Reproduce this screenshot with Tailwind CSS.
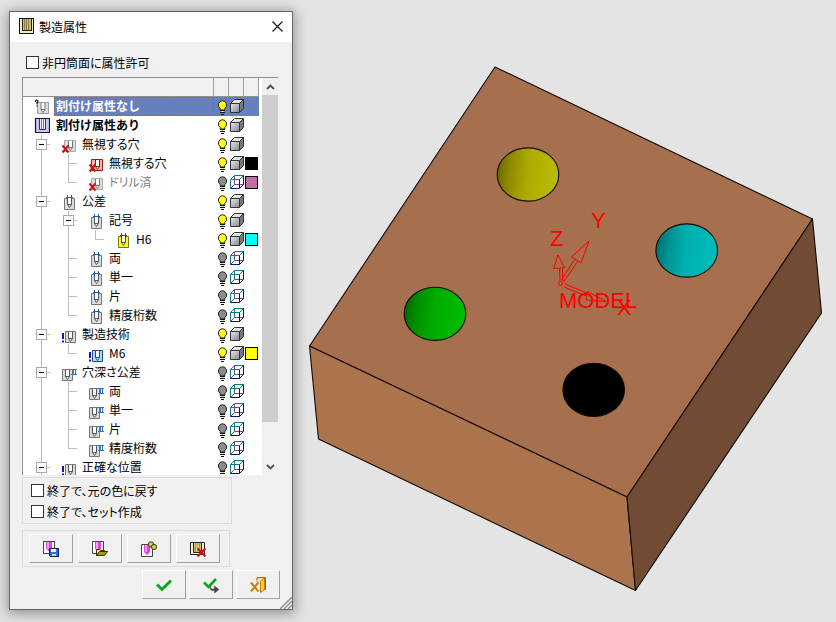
<!DOCTYPE html>
<html lang="ja">
<head>
<meta charset="utf-8">
<title>製造属性</title>
<script src="https://cdn.jsdelivr.net/npm/@tailwindcss/browser@4"></script>
</head>
<body class="relative min-h-screen overflow-hidden bg-[#e4e4e4] font-['Noto_Sans_CJK_JP',sans-serif] text-[12px] leading-[19px] text-black [font-feature-settings:'palt']">

<!-- Icon definitions -->
<svg class="absolute h-0 w-0" aria-hidden="true">
  <defs>
    <linearGradient id="cubeFace" x1="0" y1="0" x2="1" y2="1"><stop offset="0" stop-color="#e8e8ee"/><stop offset="1" stop-color="#85858d"/></linearGradient>
    <g id="pin"><path d="M4.5 1v6.5l2 3l2-3V1z" fill="#fff" stroke="none"/><path d="M4.500 1v6.500h4V1M4.500 7.500l2 3l2-3" fill="none"/></g>
  </defs>
  <symbol id="i-bulb-on" viewBox="0 0 15 19"><path d="M8.500 3.700a4.300 4.300 0 0 1 2.300 7.800V13H6.200v-1.500A4.300 4.300 0 0 1 8.500 3.700z" fill="#ff0" stroke="#222"/><path d="M6 13.500h5M6 15.500h5M7 17.500h3" stroke="#111" stroke-width="1.200"/><path d="M7 14.500h3" stroke="#ddd"/><path d="M7 6h2" stroke="#ffffd0"/></symbol>
  <symbol id="i-bulb-off" viewBox="0 0 15 19"><path d="M8.500 3.700a4.300 4.300 0 0 1 2.300 7.800V13H6.200v-1.500A4.300 4.300 0 0 1 8.500 3.700z" fill="#8c8c8c" stroke="#222"/><path d="M6 13.500h5M6 15.500h5M7 17.500h3" stroke="#111" stroke-width="1.200"/><path d="M7 14.500h3" stroke="#ddd"/></symbol>
  <symbol id="i-cube" viewBox="0 0 15 19"><path d="M1.500 6.500l4-4h9l-4 4z" fill="#e3e3e6"/><path d="M10.500 6.500l4-4v9l-4 4z" fill="#77777c"/><path d="M1.500 6.500h9v9h-9z" fill="url(#cubeFace)"/><path d="M1.500 6.500l4-4h9v9l-4 4h-9zM1.500 6.500h9v9M10.500 6.500l4-4" fill="none" stroke="#333"/></symbol>
  <symbol id="i-wire" viewBox="0 0 15 19"><path d="M1.500 6.500h9v9h-9z" fill="#fff" stroke="none"/><path d="M5.500 2.500v9h9M5.500 11.500l-4 4" fill="none" stroke="#6a4f7c"/><path d="M1.500 15.500v-9l4-4h9l-4 4h-9" fill="none" stroke="#087c84"/><path d="M14.500 2.500v9l-4 4h-9M10.500 6.500v9" fill="none" stroke="#10106c"/></symbol>

  <symbol id="i-unassigned" viewBox="0 0 16 19"><path d="M3.500 5.500h11v11h-11z" fill="#dcdcdc" stroke="#999"/><use href="#pin" x="2.500" y="5" stroke="#777"/><path d="M1.500 5V4q0-1 1.200-1T4 4.300q0 .8-1 1.400v1.500M3 8.500v1" fill="none" stroke="#111" stroke-width="1.200"/></symbol>
  <symbol id="i-assigned" viewBox="0 0 16 19"><path d="M1.500 2.500h14v14h-14z" fill="#c9c6f4" stroke="#16163a" stroke-width="1.200"/><path d="M5 3h7v10H5z" fill="#f8e8ff"/><path d="M5.500 3v10.500h6V3" fill="none" stroke="#303070"/><path d="M7.500 3v10M9.500 3v10" stroke="#e23ad0"/></symbol>
  <symbol id="i-ignored" viewBox="0 0 16 19"><path d="M3.500 5.500h11v11h-11z" fill="#dcdcdc" stroke="#aaa"/><use href="#pin" x="3" y="5" stroke="#777"/><path d="M1.500 10.500l6 7M7.500 10.500l-6 7" stroke="#c81410" stroke-width="2"/></symbol>
  <symbol id="i-ignored-red" viewBox="0 0 16 19"><path d="M3.500 5.500h11v11h-11z" fill="#ffb3ad" stroke="#a31712"/><use href="#pin" x="3" y="5" stroke="#7b1c1c"/><path d="M1.500 10.500l6 7M7.500 10.500l-6 7" stroke="#c81410" stroke-width="2"/></symbol>
  <symbol id="i-tol" viewBox="0 0 16 19"><path d="M3.500 6.500h10v11h-10z" fill="#dadada" stroke="#777"/><use href="#pin" x="2" y="5" stroke="#555"/><path d="M6.500 3v6M10.500 3v6M5 5.500h7" stroke="#2f5d9c"/></symbol>
  <symbol id="i-tol-yellow" viewBox="0 0 16 19"><path d="M3.500 6.500h10v11h-10z" fill="#ff2" stroke="#777700"/><use href="#pin" x="2" y="5" stroke="#555"/><path d="M6.500 3v6M10.500 3v6M5 5.500h7" stroke="#444"/></symbol>
  <symbol id="i-tech" viewBox="0 0 16 19"><path d="M4.500 6.500h10v11h-10z" fill="#dadada" stroke="#777"/><use href="#pin" x="3" y="6" stroke="#555"/><path d="M2 8v6M2 15.500v2" stroke="#2a08c8" stroke-width="2"/></symbol>
  <symbol id="i-tech-blue" viewBox="0 0 16 19"><path d="M4.500 6.500h10v11h-10z" fill="#a9dcfa" stroke="#1c4d80"/><use href="#pin" x="3" y="6" stroke="#1c4d80"/><path d="M2 8v6M2 15.500v2" stroke="#2a08c8" stroke-width="2"/></symbol>
  <symbol id="i-depth" viewBox="0 0 16 19"><path d="M1.500 6.500h10v11h-10z" fill="#dadada" stroke="#777"/><use href="#pin" x="0" y="6" stroke="#555"/><path d="M10 6.500h6M10 11.500h6M12.500 6.500v5M14.500 6.500v5" stroke="#3273bd"/></symbol>

  <symbol id="g-line" viewBox="0 0 27 19"><path d="M7.500 0v19" stroke="#bdbdbd"/></symbol>
  <symbol id="g-tee" viewBox="0 0 27 19"><path d="M7.500 0v19M8 9.500h8" stroke="#bdbdbd"/></symbol>
  <symbol id="g-end" viewBox="0 0 27 19"><path d="M7.500 0v9.500h8.500" fill="none" stroke="#bdbdbd"/></symbol>
  <symbol id="g-box" viewBox="0 0 27 19"><path d="M7.500 0v19M8 9.500h8" stroke="#bdbdbd"/><path d="M2.500 4.500h10v10h-10z" fill="#fff" stroke="#a9a9a9"/><path d="M5 9.500h5" stroke="#000"/></symbol>
</svg>

<!-- 3D viewport -->
<main>
  <svg class="block h-screen w-full" viewBox="0 0 836 622" preserveAspectRatio="xMinYMin meet" role="img" aria-label="MODEL">
    <defs>
      <linearGradient id="hy" x1="0" y1=".4" x2="1" y2=".5"><stop offset="0" stop-color="#686800"/><stop offset=".2" stop-color="#8c8a00"/><stop offset=".5" stop-color="#adab00"/><stop offset="1" stop-color="#bcbc00"/></linearGradient>
      <linearGradient id="hc" x1="0" y1=".4" x2="1" y2=".5"><stop offset="0" stop-color="#006d6d"/><stop offset=".2" stop-color="#009292"/><stop offset=".5" stop-color="#00b0b0"/><stop offset="1" stop-color="#00bcbc"/></linearGradient>
      <linearGradient id="hg" x1="0" y1=".4" x2="1" y2=".5"><stop offset="0" stop-color="#006800"/><stop offset=".2" stop-color="#008e00"/><stop offset=".5" stop-color="#00ad00"/><stop offset="1" stop-color="#00bc00"/></linearGradient>
    </defs>
    <g stroke="#120a06" stroke-width="1.100" stroke-linejoin="round">
      <path d="M495 67L812.500 219L627 497L309.500 346z" fill="#a66f4d"/>
      <path d="M309.500 346L627 497L635.500 590.500L318.500 439z" fill="#ac744d"/>
      <path d="M812.500 219L821.500 313L635.500 590.500L627 497z" fill="#714b34"/>
      <ellipse cx="528" cy="174.500" rx="30.800" ry="26.600" fill="url(#hy)"/>
      <ellipse cx="686.700" cy="250.500" rx="30.800" ry="26.600" fill="url(#hc)"/>
      <ellipse cx="435" cy="313.800" rx="30.800" ry="26.600" fill="url(#hg)"/>
      <ellipse cx="593.700" cy="389.800" rx="30.800" ry="26.600" fill="#000"/>
    </g>
    <g fill="none" stroke="#f00">
      <circle cx="560.500" cy="283.500" r="2"/>
      <path d="M558 255l-4.500 13.500l11-.7zM559.500 268.500l.5 12.500M562.500 268.500l.2 12.500"/>
      <path d="M589 241l-17.500 16l9.500 6zM574.500 259.500l-13 20.500M577.500 261.500l-14 20.500"/>
      <path d="M565 284l22 9M564 287l22 9M587.500 291.500l18.500 10l-20-1.500z"/>
    </g>
    <g fill="#f00" class="font-['Liberation_Sans',sans-serif] text-[22px]">
      <text x="559" y="308">MODEL</text>
      <text x="550" y="246">Z</text>
      <text x="591" y="228">Y</text>
      <text x="617" y="315">X</text>
    </g>
  </svg>
</main>

<!-- Dialog window -->
<section role="dialog" aria-labelledby="dlg-title" class="absolute top-[11px] left-[9px] w-[284px] border border-[#666] bg-[#f0f0f0] shadow-[0_2px_12px_2px_rgba(0,0,0,0.35)]">
  <header class="flex h-[30px] items-center gap-[5px] bg-white pr-[9px] pb-[2px] pl-[9px]">
    <svg class="h-4 w-[15px]" viewBox="0 0 15 16" shape-rendering="crispEdges" aria-hidden="true"><path d="M.5.5h14v15H.5z" fill="#f3eec8" stroke="#111"/><path d="M3 1h9v11H3z" fill="#cdbb6c"/><path d="M3.500 1v11.500h8.500V1" fill="none" stroke="#222"/><path d="M5.500 1v11M7.500 1v11M9.500 1v11" stroke="#8c7f43"/></svg>
    <h1 id="dlg-title" class="flex-1">製造属性</h1>
    <button type="button" aria-label="閉じる" class="flex h-4 w-3 items-center justify-center"><svg class="h-[11px] w-[11px]" viewBox="0 0 11 11"><path d="M.5.5l10 10M10.500.5l-10 10" stroke="#111" stroke-width="1.100"/></svg></button>
  </header>

  <div class="pt-[10px] pr-3 pb-[10px] pl-3">
    <label class="flex h-5 items-center gap-[3px] pl-1"><input type="checkbox" class="h-[13px] w-[13px] appearance-none border border-[#333] bg-white">非円筒面に属性許可</label>

    <!-- Attribute tree -->
    <div class="mt-[5px] mr-[2px] flex h-[398px] gap-[3px] overflow-hidden border-t border-l border-[#909090] bg-white">
      <table class="flex-1 table-fixed border-collapse">
        <colgroup><col><col class="w-[15px]"><col class="w-[15px]"><col class="w-[15px]"></colgroup>
        <thead>
          <tr class="h-[19px] bg-[#f0f0f0] shadow-[inset_0_-1px_0_#909090]">
            <td class="p-0 shadow-[inset_-1px_0_0_#a0a0a0]"></td><td class="p-0 shadow-[inset_-1px_0_0_#a0a0a0]"></td><td class="p-0 shadow-[inset_-1px_0_0_#a0a0a0]"></td><td class="p-0 shadow-[inset_-1px_0_0_#a0a0a0]"></td>
          </tr>
        </thead>
        <tbody id="tree"></tbody>
      </table>
      <div class="flex w-4 flex-col bg-[#f0f0f0]">
        <button type="button" aria-label="上へ" class="flex h-[17px] items-center justify-center"><svg class="h-[6px] w-[9px]" viewBox="0 0 9 6"><path d="M1 5l3.500-3.500L8 5" fill="none" stroke="#505050" stroke-width="1.800"/></svg></button>
        <div class="flex-1"><div class="h-[90%] bg-[#cdcdcd]"></div></div>
        <button type="button" aria-label="下へ" class="flex h-[17px] items-center justify-center"><svg class="h-[6px] w-[9px]" viewBox="0 0 9 6"><path d="M1 1l3.500 3.500L8 1" fill="none" stroke="#505050" stroke-width="1.800"/></svg></button>
      </div>
    </div>

    <div class="mt-[2px] w-[210px] border border-[#dcdcdc] pt-[2px] pb-px pl-2">
      <label class="flex h-[21px] items-center gap-[3px]"><input type="checkbox" class="h-[13px] w-[13px] appearance-none border border-[#333] bg-white">終了で、元の色に戻す</label>
      <label class="flex h-[21px] items-center gap-[3px]"><input type="checkbox" class="h-[13px] w-[13px] appearance-none border border-[#333] bg-white">終了で、セット作成</label>
    </div>

    <div class="mt-[6px] flex w-[208px] gap-[5px] border border-[#dcdcdc] py-[3px] pl-[6px]">
      <button type="button" aria-label="保存" class="flex h-[29px] w-11 items-center justify-center border border-t-white border-r-[#a0a0a0] border-b-[#a0a0a0] border-l-white bg-[#f0f0f0]">
        <svg class="h-4 w-4" viewBox="0 0 16 16" shape-rendering="crispEdges"><path d="M.5.5h11v12H.5z" fill="#fff" stroke="#444"/><path d="M3 1h6v7L6 11L3 8z" fill="#f03ce0"/><path d="M4 1h2v7H4z" fill="#ffa0f8"/><path d="M6.500 7.500h9v8h-8l-1-1z" fill="#2f70c8" stroke="#102050"/><path d="M8 8h5v3H8z" fill="#e8f0ff"/><path d="M9 13h4v2H9z" fill="#c8d8f0"/></svg>
      </button>
      <button type="button" aria-label="開く" class="flex h-[29px] w-11 items-center justify-center border border-t-white border-r-[#a0a0a0] border-b-[#a0a0a0] border-l-white bg-[#f0f0f0]">
        <svg class="h-4 w-4" viewBox="0 0 16 16"><path d="M.5.5h11v12H.5z" fill="#fff" stroke="#444"/><path d="M3 1h6v7L6 11L3 8z" fill="#f03ce0"/><path d="M4 1h2v7H4z" fill="#ffa0f8"/><path d="M4.500 14.500v-6h3l1 1h4v2z" fill="#fff27a" stroke="#333000"/><path d="M4.500 14.500l3-4h8l-3 4z" fill="#a99a10" stroke="#333000"/></svg>
      </button>
      <button type="button" aria-label="表示" class="flex h-[29px] w-11 items-center justify-center border border-t-white border-r-[#a0a0a0] border-b-[#a0a0a0] border-l-white bg-[#f0f0f0]">
        <svg class="h-4 w-4" viewBox="0 0 16 16"><path d="M.5 3.500h11v12H.5z" fill="#fff" stroke="#444"/><path d="M3 4h6v7l-3 3l-3-3z" fill="#f03ce0"/><path d="M4 4h2v7H4z" fill="#ffa0f8"/><g fill="#c9bb4c" stroke="#4a4208"><circle cx="10" cy="3.500" r="2.700"/><circle cx="13" cy="6" r="2.600"/></g><path d="M9.500 3h1M12.500 6h1" stroke="#fff"/></svg>
      </button>
      <button type="button" aria-label="削除" class="flex h-[29px] w-11 items-center justify-center border border-t-white border-r-[#a0a0a0] border-b-[#a0a0a0] border-l-white bg-[#f0f0f0]">
        <svg class="h-4 w-4" viewBox="0 0 16 16"><path d="M.5 1.500h14v12H.5z" fill="#f4f0dc" stroke="#222"/><path d="M3.500 1.500v10h8v-10z" fill="#d8c47a" stroke="#222"/><path d="M5.500 2v9M9.500 2v9" stroke="#8f9a65"/><path d="M7.500 2v9" stroke="#e8a058"/><path d="M7.500 7.500l8 8M15.500 7.500l-8 8" stroke="#d01008" stroke-width="2"/></svg>
      </button>
    </div>

    <div class="mt-[3px] flex justify-end gap-[3px]">
      <button type="button" aria-label="OK" class="flex h-[29px] w-11 items-center justify-center border border-t-white border-r-[#a0a0a0] border-b-[#a0a0a0] border-l-white bg-[#f0f0f0]">
        <svg class="h-4 w-4" viewBox="0 0 16 16"><path d="M1 7.500l5 5L15 3.500" fill="none" stroke="#0ba818" stroke-width="3"/></svg>
      </button>
      <button type="button" aria-label="適用" class="flex h-[29px] w-11 items-center justify-center border border-t-white border-r-[#a0a0a0] border-b-[#a0a0a0] border-l-white bg-[#f0f0f0]">
        <svg class="h-4 w-4" viewBox="0 0 16 16"><path d="M1 5.500l4.500 4.500L13 2" fill="none" stroke="#0ba818" stroke-width="2.600"/><path d="M7.500 9v1.500q0 1.500 2 1.500h2V9l4.500 3.500l-4.500 3.500v-2.500h-2Q7 13.500 7 10.500z" fill="#4a404c" stroke="#4a404c" stroke-width=".5"/></svg>
      </button>
      <button type="button" aria-label="終了" class="flex h-[29px] w-11 items-center justify-center border border-t-white border-r-[#a0a0a0] border-b-[#a0a0a0] border-l-white bg-[#f0f0f0]">
        <svg class="h-4 w-4" viewBox="0 0 16 16"><path d="M7 .5h8.500v12H13" fill="#f7e08c" stroke="#a86410"/><path d="M7 .5v4" stroke="#a86410"/><path d="M10.500 4.500l4-3.500v11.500l-4 3z" fill="#ffd21c" stroke="#b87a08"/><path d="M1 5.500l7.500 9M8.500 5.500L1 14.500" stroke="#d0820e" stroke-width="2.200"/></svg>
      </button>
    </div>
  </div>
  <svg class="absolute right-0 bottom-0 h-3 w-3" viewBox="0 0 12 12" aria-hidden="true"><path d="M0 12L12 0M4 12l8-8M8 12l4-4" stroke="#8c8c8c" stroke-width="1.400"/></svg>
</section>

<script>
  // [guides, icon, label, on/off, swatch, style]
  // guides: o = expander, | = line, t = branch, l = last branch
  const rows = [
    ['', 'unassigned', '割付け属性なし', 1, '', 'selected'],
    ['', 'assigned', '割付け属性あり', 1, '', 'bold'],
    ['o', 'ignored', '無視する穴', 1],
    ['|t', 'ignored-red', '無視する穴', 1, '#000000'],
    ['|l', 'ignored', 'ドリル済', 0, '#c46ca4', 'dim'],
    ['o', 'tol', '公差', 1],
    ['|o', 'tol', '記号', 1],
    ['||l', 'tol-yellow', 'H6', 1, '#00ffff'],
    ['|t', 'tol', '両', 0],
    ['|t', 'tol', '単一', 0],
    ['|t', 'tol', '片', 0],
    ['|l', 'tol', '精度桁数', 0],
    ['o', 'tech', '製造技術', 1],
    ['|l', 'tech-blue', 'M6', 1, '#ffff00'],
    ['o', 'depth', '穴深さ公差', 0],
    ['|t', 'depth', '両', 0],
    ['|t', 'depth', '単一', 0],
    ['|t', 'depth', '片', 0],
    ['|l', 'depth', '精度桁数', 0],
    ['o', 'tech', '正確な位置', 0]
  ];
  const guide = { 'o': 'g-box', '|': 'g-line', 't': 'g-tee', 'l': 'g-end' };
  const labelClass = {
    selected: "h-[19px] flex-1 border border-dashed border-[#8a7440] bg-[#6680bf] pl-px leading-[16px] font-bold text-white [font-feature-settings:normal]",
    bold: "h-[19px] flex-1 pl-[2px] leading-[18px] font-bold [font-feature-settings:normal]",
    dim: "h-[19px] flex-1 pl-px leading-[18px] text-[#808080]",
    normal: "h-[19px] flex-1 pl-px leading-[18px]"
  };
  document.getElementById('tree').innerHTML = rows.map(([g, icon, label, on, swatch, style = 'normal']) => {
    const guides = [...g].map(c => `<svg class="h-[19px] w-[27px] shrink-0" shape-rendering="crispEdges"><use href="#${guide[c]}"/></svg>`).join('');
    const cell = style === 'selected' ? 'bg-[#6680bf] p-0' : 'p-0';
    return `<tr class="h-[19px]">
      <td class="p-0"><div class="flex h-[19px] pl-[11px]">${guides}<svg class="mr-1 h-[19px] w-4 shrink-0"><use href="#i-${icon}"/></svg><span class="${labelClass[style]}">${label}</span></div></td>
      <td class="${cell}"><svg class="block h-[19px] w-[15px]"><use href="#${on ? 'i-bulb-on' : 'i-bulb-off'}"/></svg></td>
      <td class="${cell}"><svg class="block h-[19px] w-[15px]"><use href="#${on ? 'i-cube' : 'i-wire'}"/></svg></td>
      <td class="${cell}">${swatch ? `<div class="ml-px h-[13px] w-[13px] border border-black" style="background:${swatch}"></div>` : ''}</td></tr>`;
  }).join('');
</script>
</body>
</html>
